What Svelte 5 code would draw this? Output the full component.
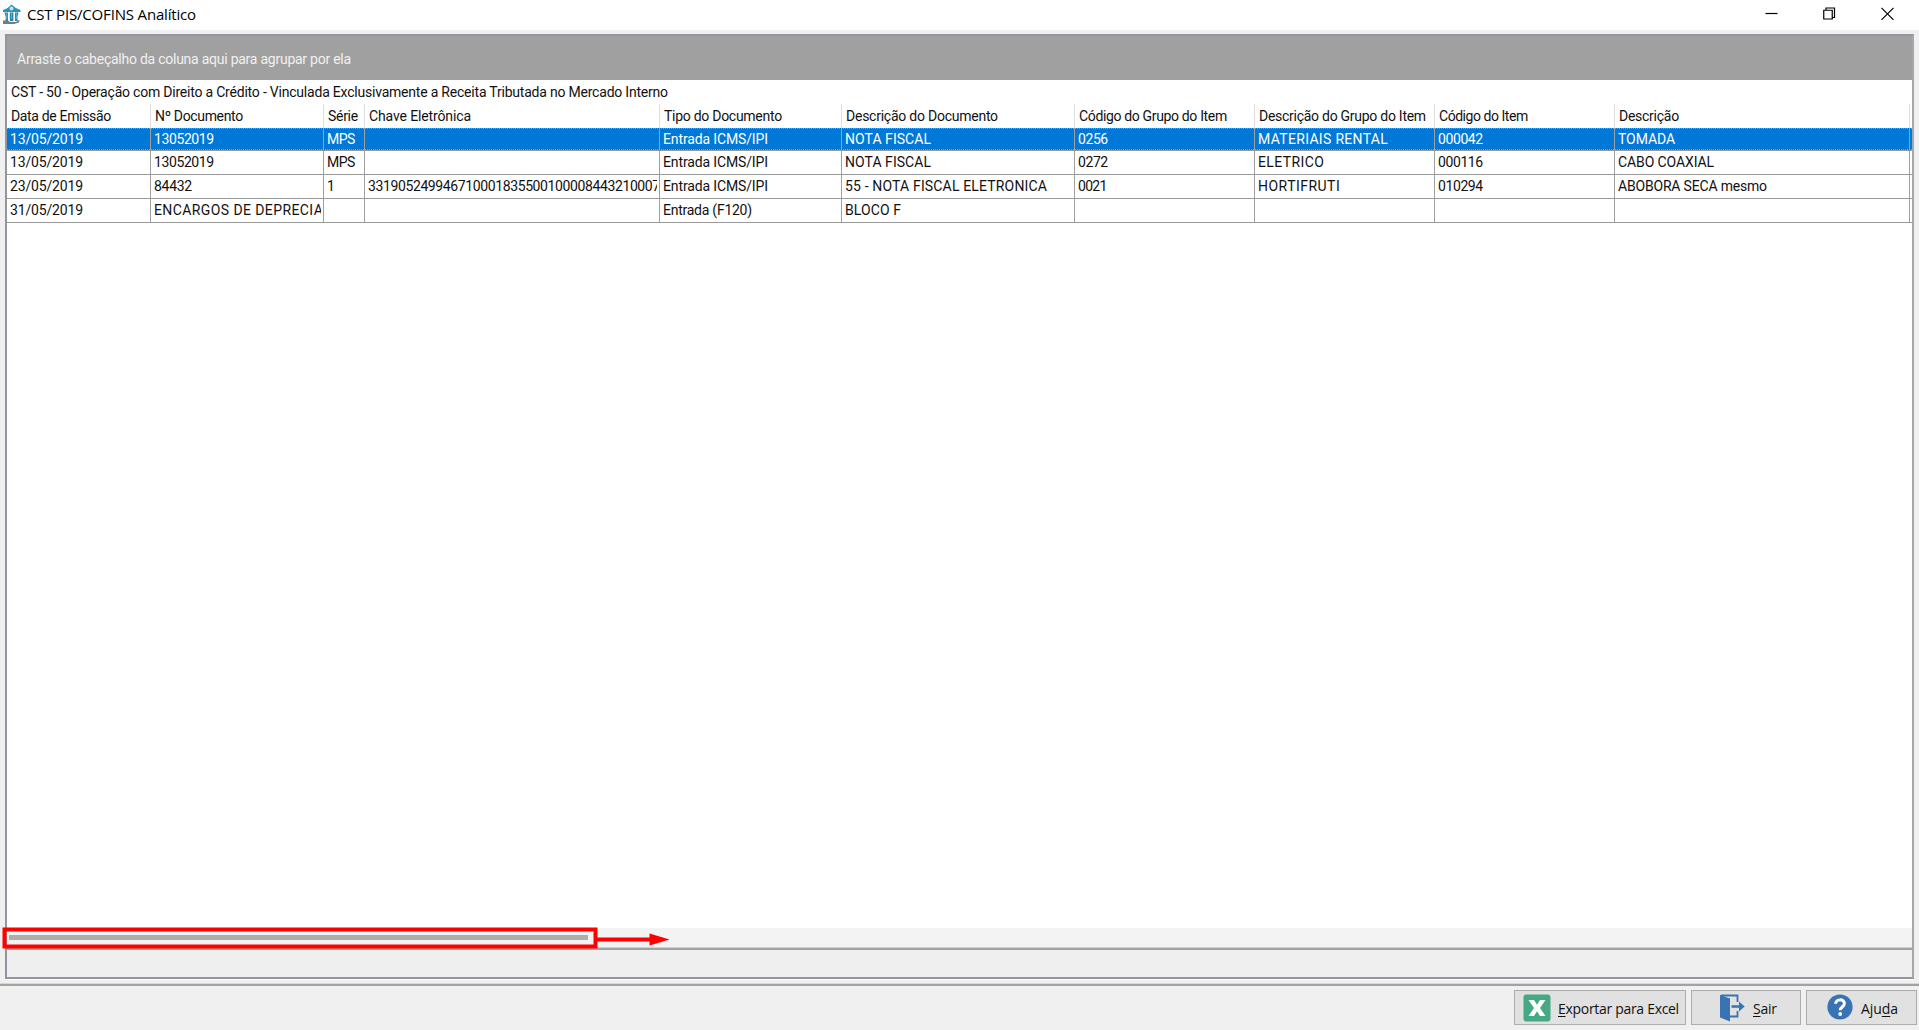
<script>
  const columns = [
    { label: 'Data de Emissão', w: 100 },
    { label: 'Nº Documento', w: 88 },
    { label: 'Série', w: 30 },
    { label: 'Chave Eletrônica', w: 102 },
    { label: 'Tipo do Documento', w: 118 },
    { label: 'Descrição do Documento', w: 152 },
    { label: 'Código do Grupo do Item', w: 148 },
    { label: 'Descrição do Grupo do Item', w: 167 },
    { label: 'Código do Item', w: 89 },
    { label: 'Descrição', w: 60 },
    { label: '', w: 0 }
  ];

  // Each cell is [text, text width in pixels]
  const rows = [
    [['13/05/2019', 73], ['13052019', 60], ['MPS', 28], ['', 0], ['Entrada ICMS/IPI', 105], ['NOTA FISCAL', 86], ['0256', 30], ['MATERIAIS RENTAL', 130], ['000042', 45], ['TOMADA', 57], ['', 0]],
    [['13/05/2019', 73], ['13052019', 60], ['MPS', 28], ['', 0], ['Entrada ICMS/IPI', 105], ['NOTA FISCAL', 86], ['0272', 30], ['ELETRICO', 66], ['000116', 45], ['CABO COAXIAL', 96], ['', 0]],
    [['23/05/2019', 73], ['84432', 38], ['1', 7], ['331905249946710001835500100008443210007', 292], ['Entrada ICMS/IPI', 105], ['55 - NOTA FISCAL ELETRONICA', 202], ['0021', 29], ['HORTIFRUTI', 82], ['010294', 45], ['ABOBORA SECA mesmo', 149], ['', 0]],
    [['31/05/2019', 73], ['ENCARGOS DE DEPRECIA', 169], ['', 0], ['', 0], ['Entrada (F120)', 89], ['BLOCO F', 56], ['', 0], ['', 0], ['', 0], ['', 0], ['', 0]]
  ];

  // Tracks a label so that it fills the given width
  function fit(node, width) {
    const count = node.textContent.length;
    if (count < 2 || !width) return;
    const natural = node.getBoundingClientRect().width;
    node.style.letterSpacing = `${(width - natural) / (count - 0.5)}px`;
  }
</script>

<div class="window">
  <header class="titlebar">
    <svg class="app-icon" viewBox="0 0 20 22" width="20" height="22">
      <path d="M1 6 Q5 5 9.500 .5 Q14 5 18.500 6 V8 H1Z" fill="#2a93bd" />
      <circle cx="9.500" cy="4.500" r="2" fill="#bfe4f1" />
      <path d="M2.500 8.500h3.500V17H3.500Q4.500 13 2.500 8.500ZM7.800 8.500h3.600V17h-3.600ZM13 8.500h3.500Q14.800 13 15.600 17H13Z" fill="#2286b2" />
      <path d="M4.800 9V15M9.600 9V15M14.300 9V15" stroke="#6fc0dd" stroke-width=".8" />
      <path d="M1 16.500H6L8 18H14L17.500 15.500 17 18.500 12 20H1Z" fill="#777b80" />
    </svg>
    <span class="title"><span use:fit={169}>CST PIS/COFINS Analítico</span></span>
    <div class="controls">
      <svg viewBox="0 0 13 13" width="13" height="13"><path d="M.5 6.500H12.500" /></svg>
      <svg viewBox="0 0 13 13" width="13" height="13"><path d="M.75 3.250H9.250V12H.75ZM3 3V1H11.500V10.500H9.500" /></svg>
      <svg viewBox="0 0 13 13" width="13" height="13"><path d="M.5 .8L12.500 12.800M12.500 .8L.5 12.800" /></svg>
    </div>
  </header>

  <main class="frame">
    <div class="group-panel"><span use:fit={334}>Arraste o cabeçalho da coluna aqui para agrupar por ela</span></div>
    <div class="band"><span use:fit={657}>CST - 50 - Operação com Direito a Crédito - Vinculada Exclusivamente a Receita Tributada no Mercado Interno</span></div>
    <div class="row head">
      {#each columns as c}
        <div class="cell"><span use:fit={c.w}>{c.label}</span></div>
      {/each}
    </div>
    {#each rows as row, i}
      <div class="row data" class:selected={i === 0}>
        {#each row as [text, w]}
          <div class="cell"><div class="clip"><span use:fit={w}>{text}</span></div></div>
        {/each}
      </div>
    {/each}
    <div class="empty"></div>
    <div class="scrollbar"><div class="thumb"></div></div>
    <div class="summary"></div>
  </main>

  <footer class="actions">
    <button class="export">
      <svg viewBox="0 0 28 28" width="28" height="28">
        <rect x=".5" y=".5" width="27" height="27" rx="3" fill="#43aa83" />
        <path d="M5.500 6H11L14 10.800 17 6H22.500L17 14 22.500 22H17L14 17.200 11 22H5.500L11 14Z" fill="#fff" />
      </svg>
      <span use:fit={121}><u>E</u>xportar para Excel</span>
    </button>
    <button class="exit">
      <svg viewBox="0 0 26 28" width="26" height="28">
        <path d="M1 1 11 4.500V27.500L1 23.500Z" fill="#3873b3" />
        <path d="M2 1.500H18.500V8M18.500 17V22.500H11" fill="none" stroke="#3873b3" stroke-width="1.800" />
        <path d="M12.500 11.300H20V7.500L25.700 12.500 20 17.500V13.700H12.500Z" fill="#3873b3" />
      </svg>
      <span use:fit={24}><u>S</u>air</span>
    </button>
    <button class="help">
      <svg viewBox="0 0 26 26" width="26" height="26">
        <circle cx="13" cy="13" r="12.600" fill="#3873b3" />
        <path d="M8.600 9.800C8.800 4.600 17.400 4.600 17.400 9.600 17.400 12.700 13.200 12.800 13.200 16.300" fill="none" stroke="#fff" stroke-width="3" />
        <circle cx="13.200" cy="20" r="1.900" fill="#fff" />
      </svg>
      <span use:fit={37}>Aju<u>d</u>a</span>
    </button>
  </footer>

  <svg class="marker" viewBox="0 0 670 24" width="670" height="24">
    <rect x="4.500" y="3.500" width="591" height="17" fill="none" stroke="#f00" stroke-width="4" />
    <path d="M597 13.500H651" stroke="#f00" stroke-width="4" />
    <path d="M649.500 7.500 669.500 13.500 649.500 19.500Z" fill="#f00" />
  </svg>
</div>

<style>
  :global(body) { margin: 0; background: #f0f0f0; }
  .window {
    position: relative;
    width: 1919px;
    height: 1030px;
    box-sizing: border-box;
    display: flex;
    flex-direction: column;
    overflow: hidden;
    background: #f0f0f0;
    color: #111;
    font: 14px/16px Roboto, "Liberation Sans", sans-serif;
    white-space: nowrap;
  }
  .titlebar {
    height: 30px;
    flex: none;
    display: flex;
    align-items: flex-start;
    background: #fff;
  }
  .app-icon { margin: 4px 5px 0 2px; }
  .title { margin-top: 4px; font: 15px/20px "Open Sans", "Noto Sans", sans-serif; color: #000; }
  .controls { margin: 7px 25px 0 auto; display: flex; gap: 45px; }
  .controls svg { fill: none; stroke: #000; stroke-width: 1.2; }
  .frame {
    margin: 4px 5px 0;
    height: 945px;
    flex: none;
    box-sizing: border-box;
    display: flex;
    flex-direction: column;
    border: 2px solid #92979f;
    border-right-color: #a3a8ae;
    background: #fff;
    box-shadow: 0 1px #fff;
    overflow: hidden;
  }
  .group-panel {
    flex: none;
    height: 44px;
    box-sizing: border-box;
    padding: 15px 0 0 10px;
    background: #a0a0a0;
    color: #f0f0f0;
  }
  .band { flex: none; height: 24px; box-sizing: border-box; padding: 4px 0 0 4px; }
  .row {
    flex: none;
    display: grid;
    grid-template-columns: 144px 173px 41px 295px 182px 233px 180px 180px 180px 295px 1fr;
  }
  .cell { min-width: 0; border-right: 1px solid #a0a0a0; overflow: hidden; }
  .cell:last-child { border-right: 0; }
  .head { height: 24px; }
  .head .cell { border-color: #dedede; padding: 4px 0 0 4px; }
  .data { height: 24px; box-sizing: border-box; border-bottom: 1px solid #999; }
  .data .cell { padding: 3px 2px 0 3px; }
  .data .clip { overflow: hidden; height: 18px; }
  .data.selected {
    height: 23px;
    background:
      repeating-linear-gradient(90deg, #e0873c 0 1px, #0078d7 1px 2px) top / 100% 1px no-repeat,
      repeating-linear-gradient(90deg, #e0873c 0 1px, #0078d7 1px 2px) bottom / 100% 1px no-repeat,
      #0078d7;
    color: #fff;
  }
  .empty { flex: 1; }
  .scrollbar { flex: none; height: 20px; background: #f3f3f3; padding: 7px 2px 0; box-sizing: border-box; }
  .thumb { width: 579px; height: 5px; background: #adadad; }
  .summary {
    flex: none;
    height: 29px;
    box-sizing: border-box;
    border-top: 2px solid #a2a2a2;
    background: #efefef;
    box-shadow: 0 -1px #d0d0d0;
  }
  .actions {
    margin-top: 5px;
    flex: 1;
    box-sizing: border-box;
    border-top: 2px solid #a2a2a2;
    box-shadow: 0 -1px #d8d8d8;
    padding: 4px 2px 0 0;
    display: flex;
    justify-content: flex-end;
    gap: 5px;
  }
  button {
    height: 35px;
    box-sizing: border-box;
    border: 1px solid #adadad;
    border-radius: 0;
    background: #e1e1e1;
    padding: 0;
    display: flex;
    align-items: flex-start;
    color: #111;
    font: 14px/20px "Open Sans", "Noto Sans", sans-serif;
  }
  button svg { flex: none; margin-top: 3px; }
  button span { margin-top: 8px; }
  u { text-decoration: underline 1px; text-underline-offset: 2px; text-decoration-skip-ink: none; }
  .export { width: 172px; padding-left: 8px; gap: 7px; }
  .exit { width: 110px; padding-left: 27px; gap: 8px; }
  .help { width: 111px; padding-left: 20px; gap: 8px; }
  .marker { position: absolute; left: 0; top: 926px; }
</style>
